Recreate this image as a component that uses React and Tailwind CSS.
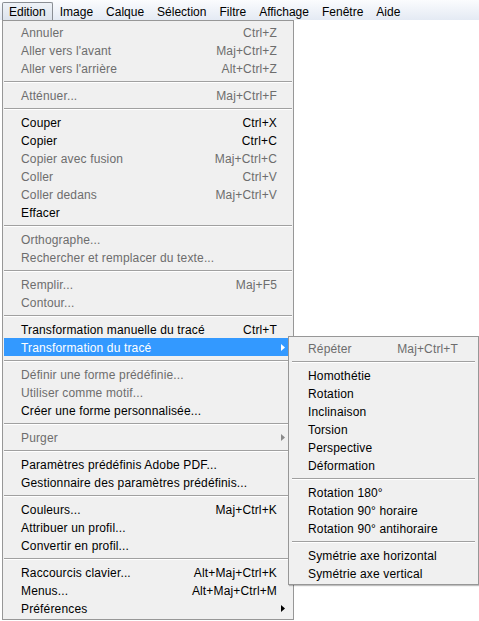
import React from "react";

const SEP = { sep: true };

const mainItems = [
  { label: "Annuler", sc: "Ctrl+Z", dis: true },
  { label: "Aller vers l'avant", sc: "Maj+Ctrl+Z", dis: true },
  { label: "Aller vers l'arrière", sc: "Alt+Ctrl+Z", dis: true },
  SEP,
  { label: "Atténuer...", sc: "Maj+Ctrl+F", dis: true },
  SEP,
  { label: "Couper", sc: "Ctrl+X" },
  { label: "Copier", sc: "Ctrl+C" },
  { label: "Copier avec fusion", sc: "Maj+Ctrl+C", dis: true },
  { label: "Coller", sc: "Ctrl+V", dis: true },
  { label: "Coller dedans", sc: "Maj+Ctrl+V", dis: true },
  { label: "Effacer" },
  SEP,
  { label: "Orthographe...", dis: true },
  { label: "Rechercher et remplacer du texte...", dis: true },
  SEP,
  { label: "Remplir...", sc: "Maj+F5", dis: true },
  { label: "Contour...", dis: true },
  SEP,
  { label: "Transformation manuelle du tracé", sc: "Ctrl+T" },
  { label: "Transformation du tracé", sub: true, hi: true },
  SEP,
  { label: "Définir une forme prédéfinie...", dis: true },
  { label: "Utiliser comme motif...", dis: true },
  { label: "Créer une forme personnalisée..." },
  SEP,
  { label: "Purger", sub: true, dis: true },
  SEP,
  { label: "Paramètres prédéfinis Adobe PDF..." },
  { label: "Gestionnaire des paramètres prédéfinis..." },
  SEP,
  { label: "Couleurs...", sc: "Maj+Ctrl+K" },
  { label: "Attribuer un profil..." },
  { label: "Convertir en profil..." },
  SEP,
  { label: "Raccourcis clavier...", sc: "Alt+Maj+Ctrl+K" },
  { label: "Menus...", sc: "Alt+Maj+Ctrl+M" },
  { label: "Préférences", sub: true },
];

const subItems = [
  { label: "Répéter", sc: "Maj+Ctrl+T", dis: true },
  SEP,
  { label: "Homothétie" },
  { label: "Rotation" },
  { label: "Inclinaison" },
  { label: "Torsion" },
  { label: "Perspective" },
  { label: "Déformation" },
  SEP,
  { label: "Rotation 180°" },
  { label: "Rotation 90° horaire" },
  { label: "Rotation 90° antihoraire" },
  SEP,
  { label: "Symétrie axe horizontal" },
  { label: "Symétrie axe vertical" },
];

function Arrow({ color }) {
  return (
    <svg width="4" height="7" viewBox="0 0 4 7" className="block">
      <polygon points="0,0 4,3.5 0,7" fill={color} />
    </svg>
  );
}

function Separator({ sub }) {
  return (
    <div className={sub ? "h-[9px] pt-[4px] px-[3px]" : "h-[9px] pt-[4px] px-[1px]"}>
      <div className="h-[2px] border-t border-t-[#a0a0a0] border-b border-b-white" />
    </div>
  );
}

function MainRow({ item }) {
  const color = item.hi ? "text-white" : item.dis ? "text-[#6d6d6d]" : "text-black";
  const bg = item.hi ? "bg-[#3399ff]" : "";
  const arrowColor = item.hi ? "#ffffff" : item.dis ? "#8a8a8a" : "#000000";
  return (
    <div className={`mx-[1px] h-[18px] pt-[2px] flex items-center pl-[17px] pr-[7px] tracking-[0.15px] ${bg} ${color}`}>
      <span className="flex-1 whitespace-nowrap">{item.label}</span>
      {item.sc && <span className="whitespace-nowrap">{item.sc}</span>}
      <span className="w-[4px] ml-[4px] -mt-[2px] flex items-center">
        {item.sub && <Arrow color={arrowColor} />}
      </span>
    </div>
  );
}

function SubRow({ item }) {
  const color = item.dis ? "text-[#6d6d6d]" : "text-black";
  return (
    <div className={`h-[18px] pt-[2px] flex items-center pl-[19px] pr-[20px] tracking-[0.15px] ${color}`}>
      <span className="flex-1 whitespace-nowrap">{item.label}</span>
      {item.sc && <span className="whitespace-nowrap">{item.sc}</span>}
    </div>
  );
}

const barItems = ["Edition", "Image", "Calque", "Sélection", "Filtre", "Affichage", "Fenêtre", "Aide"];

export default function App() {
  return (
    <div
      className="relative w-[479px] h-[621px] bg-white overflow-hidden text-[12px] leading-[18px]"
      style={{ fontFamily: '"Liberation Sans", Arial, sans-serif' }}
    >
      {/* Menu bar */}
      <div className="h-[20px] flex items-end pl-[2px] bg-gradient-to-b from-[#fbfcfe] to-[#e4eaf4]">
        {barItems.map((t, i) =>
          i === 0 ? (
            <div
              key={t}
              className="h-[18px] px-[6px] pt-[1px] flex items-center rounded-t-[2px] border border-[#8a8e94] border-b-0 bg-gradient-to-b from-[#eef2f7] to-[#dde3ec] text-black"
            >
              {t}
            </div>
          ) : (
            <div key={t} className="h-[18px] pt-[1px] pl-[7px] pr-[6px] flex items-center text-black">
              {t}
            </div>
          )
        )}
      </div>

      {/* Main dropdown */}
      <div className="ml-[2px] w-[292px] bg-[#f0f0f0] border border-[#979797] py-[2px]">
        {mainItems.map((it, i) =>
          it.sep ? <Separator key={i} /> : <MainRow key={i} item={it} />
        )}
      </div>

      {/* Submenu */}
      <div className="absolute left-[288px] top-[336px] w-[191px] bg-[#f0f0f0] border border-[#979797] py-[2px] shadow-[1px_1px_1px_rgba(0,0,0,0.25)]">
        {subItems.map((it, i) =>
          it.sep ? <Separator key={i} sub /> : <SubRow key={i} item={it} />
        )}
      </div>
    </div>
  );
}
